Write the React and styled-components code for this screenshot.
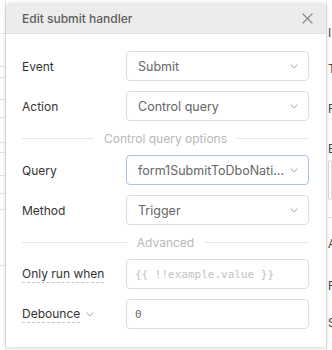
import React from 'react';
import styled, { createGlobalStyle } from 'styled-components';

const GlobalStyle = createGlobalStyle`
  html, body {
    margin: 0;
    padding: 0;
    background: #ffffff;
    font-family: Inter, "Noto Sans", "Liberation Sans", sans-serif;
  }
`;

const Page = styled.div`
  display: flex;
  width: 332px;
  height: 350px;
  overflow: hidden;
  background: #ffffff;
`;

const LeftStrip = styled.div`
  width: 5px;
  flex-shrink: 0;
  display: flex;
  flex-direction: column;
  border-right: 1px solid #e6e6e6;
`;

const StripCell = styled.div`
  height: ${props => props.h}px;
  flex-shrink: 0;
  border-bottom: 1px solid #e4e4e4;
`;

const RightStrip = styled.div`
  flex: 1;
  overflow: hidden;
  display: flex;
  flex-direction: column;
  padding-left: 1px;
  border-left: 1px solid #e8e8e8;
  font-size: 12px;
  color: #444;
  white-space: nowrap;
`;

const StripItem = styled.div`
  height: ${props => props.h}px;
  margin-top: ${props => props.top || 0}px;
  flex-shrink: 0;
  display: flex;
  align-items: center;
  box-sizing: border-box;
  ${props => props.boxed && 'border: 1px solid #ddd; border-radius: 4px;'}
  ${props => props.line && 'border-bottom: 1px solid #e4e4e4;'}
`;

const Modal = styled.div`
  width: 320px;
  flex-shrink: 0;
  margin-top: 3px;
  height: 344px;
  background: #ffffff;
  border-radius: 4px;
  box-shadow: 0 1px 5px rgba(0, 0, 0, 0.18);
  display: flex;
  flex-direction: column;
  position: relative;
  z-index: 1;
`;

const Header = styled.div`
  height: 31px;
  background: #ececec;
  border-bottom: 1px solid #e2e2e2;
  border-radius: 4px 4px 0 0;
  display: flex;
  align-items: center;
  justify-content: space-between;
  padding: 0 13px 0 16px;
  box-sizing: border-box;
`;

const Title = styled.span`
  font-size: 12px;
  font-weight: 500;
  color: #5e5e5e;
`;

const CloseButton = styled.button`
  border: none;
  background: none;
  padding: 0;
  display: flex;
  cursor: pointer;
`;

const Body = styled.div`
  display: flex;
  flex-direction: column;
  gap: 10px;
  padding: 17px 17px 0 16px;
`;

const Row = styled.div`
  display: grid;
  grid-template-columns: 104px 1fr;
  align-items: center;
  height: 30px;
`;

const Label = styled.span`
  font-size: 12px;
  color: #333;
  justify-self: start;
  display: inline-flex;
  align-items: center;
  gap: 6px;
`;

const Hint = styled.span`
  border-bottom: 1px dashed #c4c4c4;
  line-height: 16px;
`;

const Box = styled.div`
  height: 30px;
  box-sizing: border-box;
  border: 1px solid ${props => props.focused ? '#a9c3e6' : '#dedede'};
  border-radius: 4px;
  display: flex;
  align-items: center;
  justify-content: space-between;
  padding: 0 10px 0 11px;
  font-size: 12.5px;
  color: #666;
  font-family: ${props => props.mono ? '"DejaVu Sans Mono", "Liberation Mono", monospace' : 'inherit'};
  ${props => props.mono && 'font-size: 11px; padding-left: 8px;'}
`;

const Value = styled.span`
  color: ${props => props.placeholder ? '#c2c2c2' : '#666'};
  white-space: nowrap;
  overflow: hidden;
`;

const Divider = styled.div`
  height: 14px;
  display: flex;
  align-items: center;
  gap: 10px;
  font-size: 12px;
  color: #b8b8b8;
  &::before, &::after {
    content: '';
    flex: 1;
    height: 1px;
    background: #e6e6e6;
  }
`;

const Chevron = ({ color = '#c4c4c4' }) => (
  <svg width="8" height="5" viewBox="0 0 8 5" fill="none">
    <path d="M1 1l3 3 3-3" stroke={color} strokeWidth="1.1" strokeLinecap="round" strokeLinejoin="round" />
  </svg>
);

const CloseIcon = () => (
  <svg width="11" height="11" viewBox="0 0 11 11" fill="none">
    <path d="M1 1l9 9M10 1l-9 9" stroke="#8a8a8a" strokeWidth="1.3" strokeLinecap="round" />
  </svg>
);

const Select = ({ value, focused }) => (
  <Box focused={focused}>
    <Value>{value}</Value>
    <Chevron />
  </Box>
);

const leftCells = [33, 32, 10, 21, 17, 24, 9, 22, 17, 15, 55];
const rightItems = [
  { top: 22, h: 20, text: 'I' },
  { top: 16, h: 20, text: 'T' },
  { top: 20, h: 20, text: 'F' },
  { top: 20, h: 20, text: 'E' },
  { top: 2, h: 40, boxed: true },
  { h: 18, line: true },
  { top: 15, h: 20, text: 'A' },
  { top: 22, h: 20, text: 'F' },
  { top: 17, h: 20, text: 'S' },
];

export default function App() {
  return (
    <>
      <GlobalStyle />
      <Page>
        <LeftStrip>
          {leftCells.map((h, i) => <StripCell key={i} h={h} />)}
        </LeftStrip>
        <Modal>
          <Header>
            <Title>Edit submit handler</Title>
            <CloseButton><CloseIcon /></CloseButton>
          </Header>
          <Body>
            <Row>
              <Label>Event</Label>
              <Select value="Submit" />
            </Row>
            <Row>
              <Label>Action</Label>
              <Select value="Control query" />
            </Row>
            <Divider>Control query options</Divider>
            <Row>
              <Label>Query</Label>
              <Select value="form1SubmitToDboNati..." focused />
            </Row>
            <Row>
              <Label>Method</Label>
              <Select value="Trigger" />
            </Row>
            <Divider>Advanced</Divider>
            <Row>
              <Label><Hint>Only run when</Hint></Label>
              <Box mono>
                <Value placeholder>{'{{ !!example.value }}'}</Value>
              </Box>
            </Row>
            <Row>
              <Label><Hint>Debounce</Hint><Chevron /></Label>
              <Box mono>
                <Value>0</Value>
              </Box>
            </Row>
          </Body>
        </Modal>
        <RightStrip>
          {rightItems.map((it, i) => (
            <StripItem key={i} top={it.top} h={it.h} boxed={it.boxed} line={it.line}>{it.text}</StripItem>
          ))}
        </RightStrip>
      </Page>
    </>
  );
}
